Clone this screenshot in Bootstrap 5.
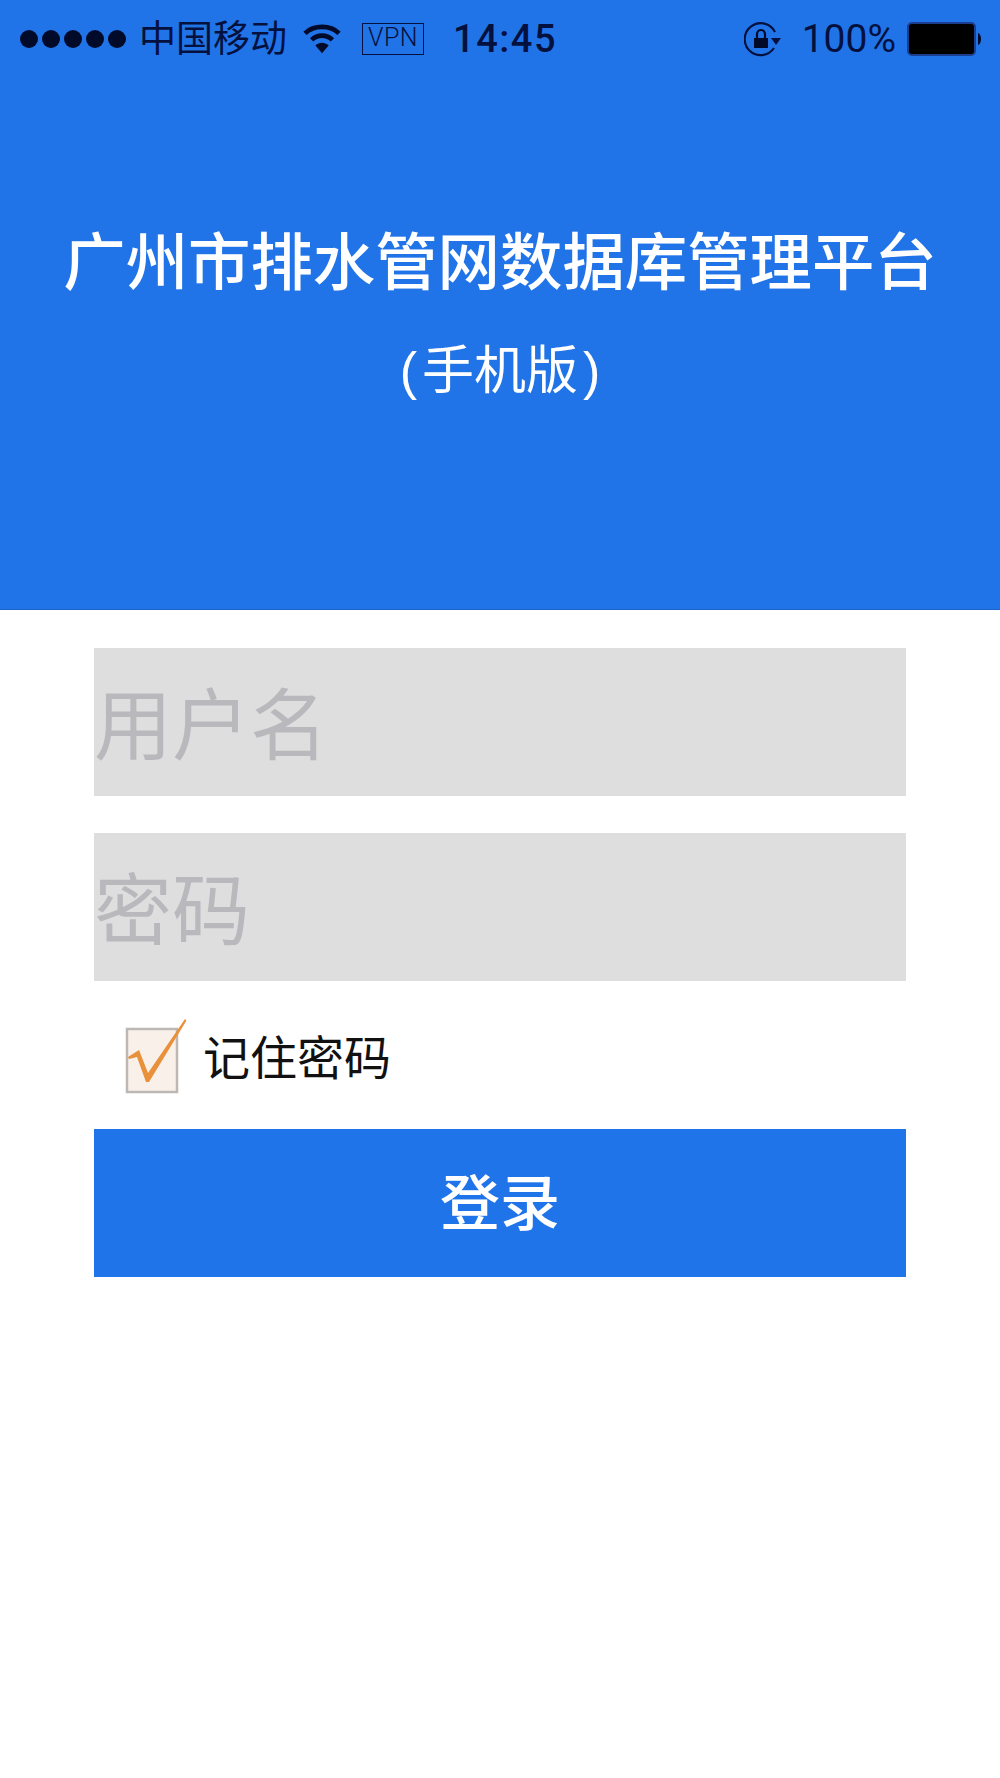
<!DOCTYPE html>
<html lang="zh-CN">
<head>
  <meta charset="UTF-8" />
  <meta name="viewport" content="width=device-width, initial-scale=1" />
  <title>广州市排水管网数据库管理平台</title>
  <link href="https://cdn.jsdelivr.net/npm/bootstrap@5.3.3/dist/css/bootstrap.min.css" rel="stylesheet" />
  <style>
    body {
      background-color: #fff;
      font-family: "Liberation Sans", "Noto Sans CJK SC", sans-serif;
      min-height: 1778px;
    }

    .top-panel {
      background-color: #2174e8;
      height: 610px;
      border-bottom: 1px solid #1a63cc;
    }

    .status-bar {
      height: 78px;
      padding: 0 17px 0 20px;
      color: #04113f;
    }
    .signal-dots { gap: 4px; }
    .signal-dots i {
      display: block;
      width: 18px;
      height: 18px;
      border-radius: 50%;
      background-color: #020a2a;
    }
    .carrier { font-size: 37px; line-height: 1; margin-left: 13px; }
    .wifi-icon { margin-left: 16px; }
    .vpn-box {
      border: 1.5px solid #04113f;
      font-family: Roboto, sans-serif;
      font-size: 25px;
      font-weight: 300;
      line-height: 28px;
      height: 32px;
      padding: 0 5px;
      margin-left: 21px;
      letter-spacing: 0.5px;
    }
    .clock {
      font-family: Roboto, sans-serif;
      font-size: 38px;
      font-weight: 500;
      letter-spacing: 1.5px;
      line-height: 1;
      margin-left: 29px;
    }
    .percent {
      font-family: Roboto, sans-serif;
      font-size: 39px;
      font-weight: 400;
      line-height: 1;
      margin-left: 20px;
      margin-right: 11px;
    }

    .title-main {
      font-size: 62.4px;
      line-height: 1.2;
      color: #fff;
      font-weight: 500;
      margin-top: 149px;
      margin-bottom: 0;
      white-space: nowrap;
    }
    .title-sub {
      font-size: 52px;
      line-height: 1.2;
      color: #fff;
      margin-top: 38px;
    }
    .title-sub span { margin: 0 5px; }

    .login-form {
      padding: 38px 94px 0;
    }
    .field-input, .field-input:focus {
      background-color: #dedede;
      border: 0;
      border-radius: 0;
      height: 148px;
      padding: 10px 0 0;
      font-size: 78px;
      box-shadow: none;
      color: #333;
    }
    .field-input::placeholder { color: #b9b9bd; opacity: 1; }
    .field-second { margin-top: 37px; }

    .remember-row { height: 148px; padding-left: 30px; gap: 15px; }
    .remember-text { font-size: 47px; line-height: 1; color: #111; margin-top: 6px; }

    .btn-login, .btn-login:hover {
      background-color: #1f74ea;
      color: #fff;
      border: 0;
      border-radius: 0;
      height: 148px;
      padding-top: 10px;
      font-size: 60px;
      font-weight: 500;
    }
  </style>
</head>
<body>

  <div class="top-panel">
    <div class="status-bar d-flex align-items-center">
      <div class="signal-dots d-flex">
        <i></i><i></i><i></i><i></i><i></i>
      </div>
      <span class="carrier">中国移动</span>
      <svg class="wifi-icon" width="38" height="34" viewBox="0 0 40 36">
        <path d="M2 12 C11 3 29 3 38 12" fill="none" stroke="#020a2a" stroke-width="5"/>
        <path d="M9 19 C15 13 25 13 31 19" fill="none" stroke="#020a2a" stroke-width="5"/>
        <path d="M13 25 C17 21 23 21 27 25 L20 33 Z" fill="#020a2a"/>
      </svg>
      <span class="vpn-box">VPN</span>
      <span class="clock">14:45</span>
      <svg class="ms-auto" width="38" height="38" viewBox="0 0 38 38">
        <path d="M31 12 A16 16 0 1 0 30 28" fill="none" stroke="#04113f" stroke-width="2.2"/>
        <path d="M27 18 L37 18 L32 25 Z" fill="#04113f"/>
        <rect x="10" y="18" width="14" height="10" fill="#020a2a"/>
        <path d="M13 18 V14 A4 4 0 0 1 21 14 V18" fill="none" stroke="#020a2a" stroke-width="2.2"/>
      </svg>
      <span class="percent">100%</span>
      <svg width="76" height="36" viewBox="0 0 76 36">
        <rect x="1" y="2" width="67" height="32" rx="4" fill="#000" stroke="#1b3f8e" stroke-width="2"/>
        <path d="M71 12 C75 13 75 23 71 24 Z" fill="#020a2a"/>
      </svg>
    </div>

    <h1 class="title-main text-center">广州市排水管网数据库管理平台</h1>
    <div class="title-sub text-center">(<span>手机版</span>)</div>
  </div>

  <form class="login-form d-flex flex-column">
    <input type="text" class="form-control field-input" placeholder="用户名" />
    <input type="password" class="form-control field-input field-second" placeholder="密码" />
    <div class="remember-row d-flex align-items-center">
      <svg width="64" height="78" viewBox="0 0 64 78">
        <rect x="3" y="13" width="50" height="63" fill="#faf0ea" stroke="#bdb8b4" stroke-width="2.5"/>
        <polygon points="4,41 15,34 24,57 61,3 62.5,4.5 25,66 22,66 13,41 5,43" fill="#e8903a"/>
      </svg>
      <span class="remember-text">记住密码</span>
    </div>
    <button type="button" class="btn btn-login w-100">登录</button>
  </form>

<script src="https://cdn.jsdelivr.net/npm/bootstrap@5.3.3/dist/js/bootstrap.bundle.min.js"></script>
</body>
</html>
